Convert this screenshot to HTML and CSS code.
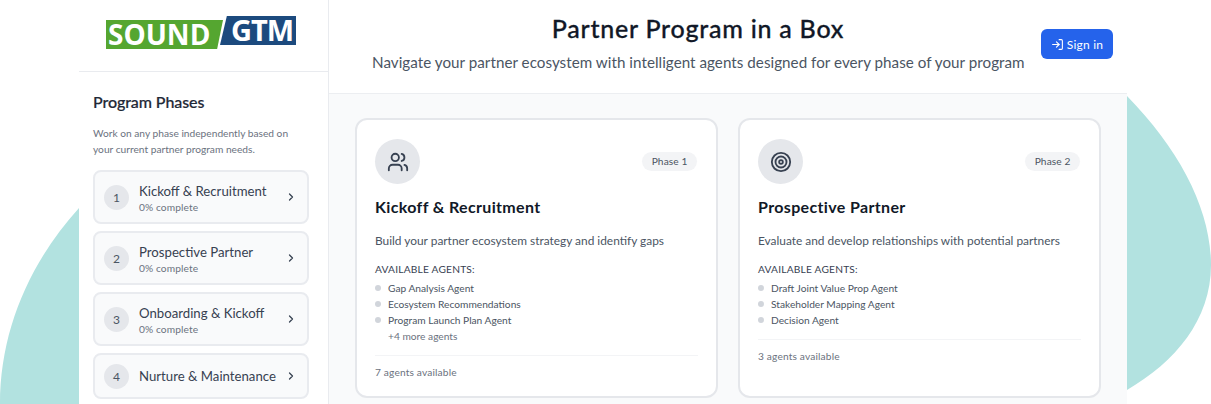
FILE: index.html
```html
<!DOCTYPE html>
<html lang="en">
<head>
<meta charset="utf-8">
<title>Partner Program in a Box</title>
<link rel="stylesheet" href="styles.css">
</head>
<body>
<svg class="blob" width="1211" height="404" viewBox="0 0 1211 404"><path d="M79 208C30 262 0 330 0 404L79 404Z M1127 96C1180 150 1211 210 1211 265C1211 320 1175 362 1127 390Z"/></svg>
<div class="app">
  <aside class="sidebar">
    <div class="logo-area">
      <div class="logo">
        <span class="logo-green">SOUND</span><span class="logo-blue">GTM</span>
      </div>
    </div>
    <div class="side-body">
      <h2 class="side-title">Program Phases</h2>
      <p class="side-text">Work on any phase independently based on your current partner program needs.</p>
      <div class="phase-list">
        <div class="phase"><span class="num">1</span><div class="phase-text"><div class="phase-name">Kickoff &amp; Recruitment</div><div class="phase-pct">0% complete</div></div><svg class="chev" viewBox="0 0 24 24"><path d="M9 6l6 6-6 6"/></svg></div>
        <div class="phase"><span class="num">2</span><div class="phase-text"><div class="phase-name">Prospective Partner</div><div class="phase-pct">0% complete</div></div><svg class="chev" viewBox="0 0 24 24"><path d="M9 6l6 6-6 6"/></svg></div>
        <div class="phase"><span class="num">3</span><div class="phase-text"><div class="phase-name">Onboarding &amp; Kickoff</div><div class="phase-pct">0% complete</div></div><svg class="chev" viewBox="0 0 24 24"><path d="M9 6l6 6-6 6"/></svg></div>
        <div class="phase short"><span class="num">4</span><div class="phase-text"><div class="phase-name">Nurture &amp; Maintenance</div></div><svg class="chev" viewBox="0 0 24 24"><path d="M9 6l6 6-6 6"/></svg></div>
      </div>
    </div>
  </aside>
  <div class="content">
    <header class="header">
      <div class="head-text">
        <h1 class="title">Partner Program in a Box</h1>
        <p class="subtitle">Navigate your partner ecosystem with intelligent agents designed for every phase of your program</p>
      </div>
      <button class="signin"><svg class="signin-icon" viewBox="0 0 24 24"><path d="M15 3h4a2 2 0 0 1 2 2v14a2 2 0 0 1-2 2h-4"/><path d="M10 17l5-5-5-5"/><path d="M15 12H3"/></svg>Sign in</button>
    </header>
    <main class="main">
      <article class="card">
        <div class="card-top">
          <span class="icon-circle"><svg class="card-icon" viewBox="0 0 24 24"><path d="M16 21v-2a4 4 0 0 0-4-4H6a4 4 0 0 0-4 4v2"/><circle cx="9" cy="7" r="4"/><path d="M22 21v-2a4 4 0 0 0-3-3.87"/><path d="M16 3.13a4 4 0 0 1 0 7.75"/></svg></span>
          <span class="badge">Phase 1</span>
        </div>
        <h3 class="card-title">Kickoff &amp; Recruitment</h3>
        <p class="card-desc">Build your partner ecosystem strategy and identify gaps</p>
        <div class="agents-label">AVAILABLE AGENTS:</div>
        <ul class="agents">
          <li>Gap Analysis Agent</li>
          <li>Ecosystem Recommendations</li>
          <li>Program Launch Plan Agent</li>
          <li class="more">+4 more agents</li>
        </ul>
        <div class="card-foot">7 agents available</div>
      </article>
      <article class="card">
        <div class="card-top">
          <span class="icon-circle"><svg class="card-icon" viewBox="0 0 24 24"><circle cx="12" cy="12" r="10"/><circle cx="12" cy="12" r="6"/><circle cx="12" cy="12" r="2"/></svg></span>
          <span class="badge">Phase 2</span>
        </div>
        <h3 class="card-title">Prospective Partner</h3>
        <p class="card-desc">Evaluate and develop relationships with potential partners</p>
        <div class="agents-label">AVAILABLE AGENTS:</div>
        <ul class="agents">
          <li>Draft Joint Value Prop Agent</li>
          <li>Stakeholder Mapping Agent</li>
          <li>Decision Agent</li>
        </ul>
        <div class="card-foot">3 agents available</div>
      </article>
    </main>
  </div>
</div>
</body>
</html>
```
FILE: styles.css
```css
* { box-sizing: border-box; }
html, body { margin: 0; height: 404px; overflow: hidden; }
body { position: relative; background: #fff; font-family: "Lato", "Open Sans", sans-serif; color: #111827; }
.blob { position: absolute; left: 0; top: 0; }
.blob path { fill: #b2e2e0; }
.app { position: relative; display: flex; width: 1048px; height: 404px; margin-left: 79px; background: #fff; }
.sidebar { width: 250px; flex: none; border-right: 1px solid #e9ebef; }
.logo-area { height: 72px; padding: 16px 0 0 27px; border-bottom: 1px solid #e9ebef; }
.logo { display: flex; align-items: flex-start; font-family: "Open Sans", sans-serif; font-weight: 700; color: #fff; }
.logo-green { width: 117px; height: 29px; margin-top: 4px; padding-left: 2px; background: #55a630; font-size: 28px; line-height: 28px; clip-path: polygon(0 0, 100% 0, 95% 100%, 0 100%); }
.logo-blue { width: 76px; height: 29px; margin-left: -3px; padding-left: 11px; background: #1c4a7e; font-size: 29px; line-height: 27px; letter-spacing: -1px; clip-path: polygon(9% 0, 100% 0, 100% 100%, 0 100%); }
.side-body { padding: 20px 19px 0 14px; }
.side-title { margin: 0; font-size: 16px; line-height: 20px; font-weight: 500; letter-spacing: -0.08px; color: #1f2937; -webkit-text-stroke: 0.2px #1f2937; }
.side-text { margin: 13px 0 13px; font-size: 10.2px; line-height: 16px; color: #6b7280; }
.phase-list { display: flex; flex-direction: column; gap: 7px; }
.phase { display: flex; align-items: center; height: 54px; padding: 0 10px 0 9px; background: #f9fafb; border: 2px solid #e9ebef; border-radius: 8px; }
.phase.short { height: 46px; }
.num { display: flex; align-items: center; justify-content: center; width: 25px; height: 25px; flex: none; margin-right: 10px; border-radius: 50%; background: #e5e7eb; font-size: 12px; color: #4b5563; }
.phase-text { flex: 1; min-width: 0; padding-top: 2px; }
.phase.short .phase-text { padding-top: 0; }
.phase-name { font-size: 13.2px; line-height: 18px; white-space: nowrap; color: #374151; }
.phase-pct { margin-top: 1px; font-size: 10.2px; line-height: 13px; letter-spacing: 0.1px; color: #6b7280; }
.chev { width: 12px; height: 12px; flex: none; fill: none; stroke: #374151; stroke-width: 2.5; stroke-linecap: round; stroke-linejoin: round; }
.content { flex: 1; min-width: 0; display: flex; flex-direction: column; }
.header { height: 94px; display: flex; padding: 0 14px 0 43px; border-bottom: 1px solid #eceef1; }
.head-text { width: 652px; text-align: center; }
.title { margin: 13px 0 0; font-size: 25px; line-height: 30px; font-weight: 500; letter-spacing: 0.75px; color: #111827; -webkit-text-stroke: 0.3px #111827; }
.subtitle { margin: 9px 0 0; font-size: 15.2px; line-height: 20px; letter-spacing: 0.03px; white-space: nowrap; color: #4b5563; }
.signin { display: flex; align-items: center; justify-content: center; gap: 3px; width: 72px; height: 30px; margin: 29px 0 0 17px; padding: 0; border: 0; border-radius: 6px; background: #2563eb; color: #fff; font-family: inherit; font-size: 12px; letter-spacing: 0.2px; }
.signin-icon { width: 13px; height: 13px; fill: none; stroke: #fff; stroke-width: 2; stroke-linecap: round; stroke-linejoin: round; }
.main { flex: 1; display: flex; gap: 20px; padding: 24px 26px 0; background: #f9fafb; }
.card { width: 363px; height: 280px; flex: none; padding: 19px 18px; background: #fff; border: 2px solid #e5e7eb; border-radius: 12px; }
.card-top { display: flex; justify-content: space-between; align-items: flex-start; }
.icon-circle { display: flex; align-items: center; justify-content: center; width: 45px; height: 45px; border-radius: 50%; background: #e5e7eb; }
.card-icon { width: 22px; height: 22px; fill: none; stroke: #374151; stroke-width: 2; stroke-linecap: round; stroke-linejoin: round; }
.badge { margin: 13px 1px 0 0; height: 19px; padding: 0 9.5px; border-radius: 10px; background: #f3f4f6; font-size: 10.2px; line-height: 19px; letter-spacing: 0.1px; color: #4b5563; }
.card-title { margin: 13px 0 0; font-size: 16px; line-height: 20px; font-weight: 700; letter-spacing: 0.35px; color: #111827; }
.card-desc { margin: 16px 0 0; font-size: 11.9px; line-height: 16px; color: #4b5563; }
.agents-label { margin-top: 13px; font-size: 10.2px; line-height: 14px; letter-spacing: 0.2px; color: #374151; }
.agents { margin: 4px 0 0; padding: 0; list-style: none; }
.agents li { position: relative; padding-left: 13px; font-size: 10.2px; line-height: 16px; color: #4b5563; }
.agents li::before { content: ""; position: absolute; left: 0; top: 5px; width: 6px; height: 6px; border-radius: 50%; background: #d1d5db; }
.agents li.more { color: #6b7280; }
.agents li.more::before { display: none; }
.card-foot { margin-top: 11px; padding-top: 9px; border-top: 1px solid #f3f4f6; font-size: 10.2px; line-height: 14px; letter-spacing: 0.15px; color: #6b7280; }
```
